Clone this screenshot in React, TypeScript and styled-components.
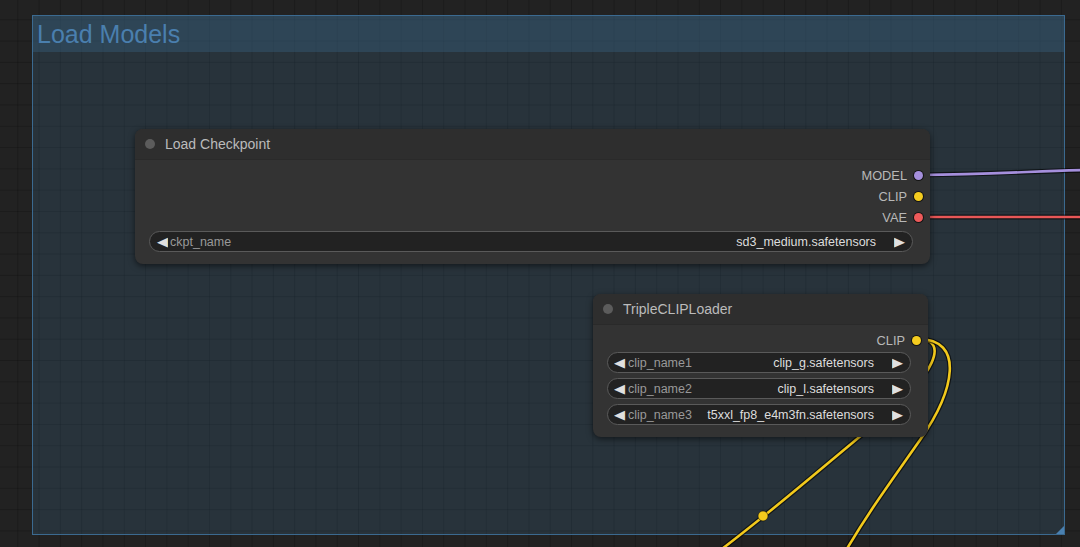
import styled, { createGlobalStyle } from 'styled-components';

const GlobalStyle = createGlobalStyle`
  html, body {
    margin: 0;
    padding: 0;
    background: #222;
    overflow: hidden;
  }
  * {
    box-sizing: border-box;
  }
`;

const Canvas = styled.div`
  position: relative;
  width: 1080px;
  height: 547px;
  overflow: hidden;
  font-family: 'Liberation Sans', Arial, sans-serif;
  background-color: #222;
  background-image: linear-gradient(rgba(0, 0, 0, 0.2) 1px, transparent 1px),
    linear-gradient(90deg, rgba(0, 0, 0, 0.2) 1px, transparent 1px);
  background-size: 21.3px 21.3px;
  background-position: -4px -2px;
`;

const Group = styled.div`
  position: absolute;
  left: 32px;
  top: 15px;
  width: 1033px;
  height: 520px;
  display: flex;
  flex-direction: column;
  background: rgba(63, 120, 158, 0.2);
  border: 1px solid #3b6a90;
`;

const GroupHeader = styled.div`
  height: 36px;
  display: flex;
  align-items: center;
  padding-left: 4px;
  background: rgba(63, 120, 158, 0.28);
  color: #4a7fae;
  font-size: 25px;
`;

const Corner = styled.div`
  position: absolute;
  right: 0;
  bottom: 0;
  width: 0;
  height: 0;
  border-left: 8px solid transparent;
  border-bottom: 8px solid #4a80b0;
`;

const Wires = styled.svg`
  position: absolute;
  left: 0;
  top: 0;
`;

const Node = styled.div<{ x: number; y: number; w: number }>`
  position: absolute;
  left: ${p => p.x}px;
  top: ${p => p.y}px;
  width: ${p => p.w}px;
  display: flex;
  flex-direction: column;
  background: #333;
  border-radius: 8px;
  box-shadow: 0 2px 6px rgba(0, 0, 0, 0.55);
`;

const TitleBar = styled.div`
  height: 31px;
  display: flex;
  align-items: center;
  gap: 10px;
  padding-left: 10px;
  background: #2e2e2e;
  border-radius: 8px 8px 0 0;
  border-bottom: 1px solid #2a2a2a;
  color: #bbb;
  font-size: 14px;
`;

const TitleDot = styled.span`
  width: 10px;
  height: 10px;
  border-radius: 50%;
  background: #5c5c5c;
`;

const Body = styled.div<{ top: number; bottom: number; gap: number }>`
  display: flex;
  flex-direction: column;
  padding: ${p => p.top}px 0 ${p => p.bottom}px;
  gap: ${p => p.gap}px;
`;

const Outputs = styled.div`
  display: flex;
  flex-direction: column;
`;

const OutputRow = styled.div`
  height: 21px;
  display: flex;
  align-items: center;
  justify-content: flex-end;
  gap: 7px;
  padding-right: 7px;
  color: #b8b8b8;
  font-size: 12.8px;
`;

const Slot = styled.span<{ color: string }>`
  width: 9px;
  height: 9px;
  border-radius: 50%;
  background: ${p => p.color};
  box-shadow: 0 0 0 1px rgba(0, 0, 0, 0.6);
`;

const Widgets = styled.div`
  display: flex;
  flex-direction: column;
  gap: 5px;
  padding: 0 17px 0 14px;
`;

const Widget = styled.div`
  height: 21px;
  display: flex;
  align-items: center;
  padding: 0 5px 0 5px;
  background: #222;
  border: 1px solid #5a5a5a;
  border-radius: 11px;
  font-size: 12.5px;
`;

const Arrow = styled.span`
  color: #e0e0e0;
  font-size: 13px;
  width: 14px;
  line-height: 1;
  text-align: center;
  transform: scaleX(1.1);
`;

const Label = styled.span`
  color: #999;
  padding-left: 1px;
  white-space: nowrap;
`;

const Value = styled.span`
  flex: 1;
  text-align: right;
  color: #ddd;
  padding-right: 17px;
  white-space: nowrap;
`;

type WidgetRow = { label: string; value: string };

function ComboWidget({ label, value }: WidgetRow) {
  return (
    <Widget>
      <Arrow>◀</Arrow>
      <Label>{label}</Label>
      <Value>{value}</Value>
      <Arrow>▶</Arrow>
    </Widget>
  );
}

const checkpointOutputs = [
  { name: 'MODEL', color: '#a58fdc' },
  { name: 'CLIP', color: '#f5cc1f' },
  { name: 'VAE', color: '#ee5a5a' },
];

const clipWidgets: WidgetRow[] = [
  { label: 'clip_name1', value: 'clip_g.safetensors' },
  { label: 'clip_name2', value: 'clip_l.safetensors' },
  { label: 'clip_name3', value: 't5xxl_fp8_e4m3fn.safetensors' },
];

function Wire({ d, color }: { d: string; color: string }) {
  return (
    <>
      <path d={d} stroke="rgba(0,0,0,0.6)" strokeWidth={5} fill="none" />
      <path d={d} stroke={color} strokeWidth={2.6} fill="none" />
    </>
  );
}

function App() {
  return (
    <>
      <GlobalStyle />
      <Canvas>
        <Group>
          <GroupHeader>Load Models</GroupHeader>
          <Corner />
        </Group>

        <Wires width={1080} height={547} viewBox="0 0 1080 547">
          <Wire d="M 920 175 C 990 174, 1020 172, 1085 170" color="#a58fdc" />
          <Wire d="M 920 217 C 990 217, 1020 217, 1085 217" color="#e85757" />
          <Wire
            d="M 918 339 C 950 339, 935 375, 880 420 S 780 505, 718 552"
            color="#f2c91c"
          />
          <Wire
            d="M 918 339 C 965 339, 955 390, 920 440 S 870 510, 845 552"
            color="#f2c91c"
          />
          <circle cx={763} cy={516} r={5} fill="#f2c91c" stroke="rgba(0,0,0,0.5)" />
        </Wires>

        <Node x={135} y={129} w={795}>
          <TitleBar>
            <TitleDot />
            Load Checkpoint
          </TitleBar>
          <Body top={5} bottom={12} gap={3}>
            <Outputs>
              {checkpointOutputs.map(o => (
                <OutputRow key={o.name}>
                  {o.name}
                  <Slot color={o.color} />
                </OutputRow>
              ))}
            </Outputs>
            <Widgets>
              <ComboWidget label="ckpt_name" value="sd3_medium.safetensors" />
            </Widgets>
          </Body>
        </Node>

        <Node x={593} y={294} w={335}>
          <TitleBar>
            <TitleDot />
            TripleCLIPLoader
          </TitleBar>
          <Body top={5} bottom={12} gap={1}>
            <Outputs>
              <OutputRow>
                CLIP
                <Slot color="#f5cc1f" />
              </OutputRow>
            </Outputs>
            <Widgets>
              {clipWidgets.map(w => (
                <ComboWidget key={w.label} {...w} />
              ))}
            </Widgets>
          </Body>
        </Node>
      </Canvas>
    </>
  );
}

export default App;
